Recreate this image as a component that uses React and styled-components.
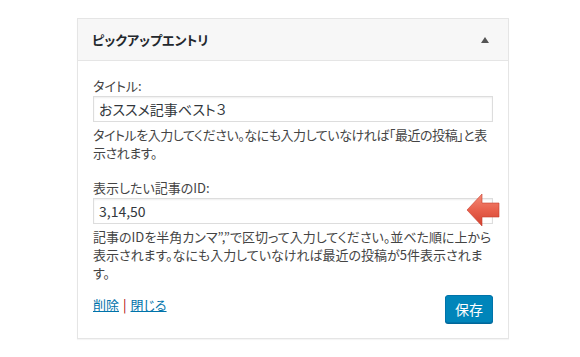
import React from "react";
import styled, { createGlobalStyle } from "styled-components";

const GlobalStyle = createGlobalStyle`
  html, body {
    margin: 0;
    padding: 0;
    background: #fff;
  }
  body {
    font-family: "Noto Sans CJK JP", "Open Sans", sans-serif;
    font-feature-settings: "palt";
    color: #444;
  }
`;

const Page = styled.div`
  width: 580px;
  height: 357px;
  padding: 18px 0 0 77px;
  box-sizing: border-box;
`;

const Widget = styled.div`
  width: 432px;
  border: 1px solid #e5e5e5;
  box-shadow: 0 1px 1px rgba(0, 0, 0, 0.04);
  background: #fff;
  box-sizing: border-box;
`;

const Header = styled.div`
  display: flex;
  align-items: center;
  justify-content: space-between;
  height: 42px;
  padding: 0 15px 0 14px;
  background: #f7f7f7;
  border-bottom: 1px solid #e5e5e5;
  box-sizing: border-box;
`;

const Title = styled.h3`
  margin: 0;
  font-size: 13px;
  font-weight: 700;
  color: #23282d;
`;

const Toggle = styled.span`
  width: 0;
  height: 0;
  margin-right: 4px;
  border-left: 4px solid transparent;
  border-right: 4px solid transparent;
  border-bottom: 6px solid #555;
`;

const Body = styled.div`
  padding: 16px 15px 15px;
`;

const Field = styled.div`
  display: flex;
  flex-direction: column;
  margin-bottom: ${(p) => p.$gap || 0}px;
`;

const Label = styled.label`
  font-size: 13px;
  line-height: 18px;
  color: #444;
`;

const Input = styled.input`
  height: 26px;
  margin: 1px 0 4px;
  padding: 0 5px;
  border: 1px solid #ddd;
  box-shadow: inset 0 1px 2px rgba(0, 0, 0, 0.07);
  font-family: inherit;
  font-feature-settings: "palt";
  font-size: 14px;
  color: #32373c;
  box-sizing: border-box;
  width: 100%;
  outline: none;
`;

const InputWrap = styled.div`
  position: relative;
`;

const Help = styled.p`
  margin: 0;
  font-size: 13px;
  line-height: 18px;
  color: #444;
  letter-spacing: ${(p) => (p.$tight ? "-0.45px" : "0")};
`;

const Pointer = styled.svg`
  position: absolute;
  right: -7px;
  top: -4px;
`;

const Footer = styled.div`
  display: flex;
  justify-content: space-between;
  align-items: flex-start;
  margin-top: 13px;
`;

const Links = styled.div`
  font-size: 13px;
  line-height: 18px;
  padding-top: 1px;
`;

const Link = styled.a`
  color: #0073aa;
  text-decoration: underline;
`;

const Sep = styled.span`
  color: #a00;
  margin: 0 4px;
`;

const SaveButton = styled.button`
  width: 48px;
  height: 28px;
  padding: 0;
  border: 1px solid #0073aa;
  border-radius: 3px;
  background: #0085ba;
  box-shadow: 0 1px 0 #006799;
  color: #fff;
  font-family: inherit;
  font-size: 14px;
`;

const Arrow = () => (
  <Pointer width="34" height="34" viewBox="0 0 34 34">
    <defs>
      <linearGradient id="ag" x1="0" y1="0" x2="0" y2="1">
        <stop offset="0" stopColor="#f48a76" />
        <stop offset="0.5" stopColor="#e8604c" />
        <stop offset="1" stopColor="#d2412f" />
      </linearGradient>
    </defs>
    <polygon
      points="1,17 16,1 16,10 33,10 33,24 16,24 16,33"
      fill="url(#ag)"
      stroke="#c83c2c"
      strokeWidth="0.6"
    />
  </Pointer>
);

export default function App() {
  return (
    <>
      <GlobalStyle />
      <Page>
        <Widget>
          <Header>
            <Title>ピックアップエントリ</Title>
            <Toggle />
          </Header>
          <Body>
            <Field $gap={17}>
              <Label>タイトル:</Label>
              <Input defaultValue="おススメ記事ベスト３" />
              <Help $tight>
                タイトルを入力してください。なにも入力していなければ「最近の投稿」と表示されます。
              </Help>
            </Field>
            <Field>
              <Label>表示したい記事のID:</Label>
              <InputWrap>
                <Input defaultValue="3,14,50" />
                <Arrow />
              </InputWrap>
              <Help>
                記事のIDを半角カンマ”,”で区切って入力してください。並べた順に上から表示されます。なにも入力していなければ最近の投稿が5件表示されます。
              </Help>
            </Field>
            <Footer>
              <Links>
                <Link href="#">削除</Link>
                <Sep>|</Sep>
                <Link href="#">閉じる</Link>
              </Links>
              <SaveButton>保存</SaveButton>
            </Footer>
          </Body>
        </Widget>
      </Page>
    </>
  );
}
